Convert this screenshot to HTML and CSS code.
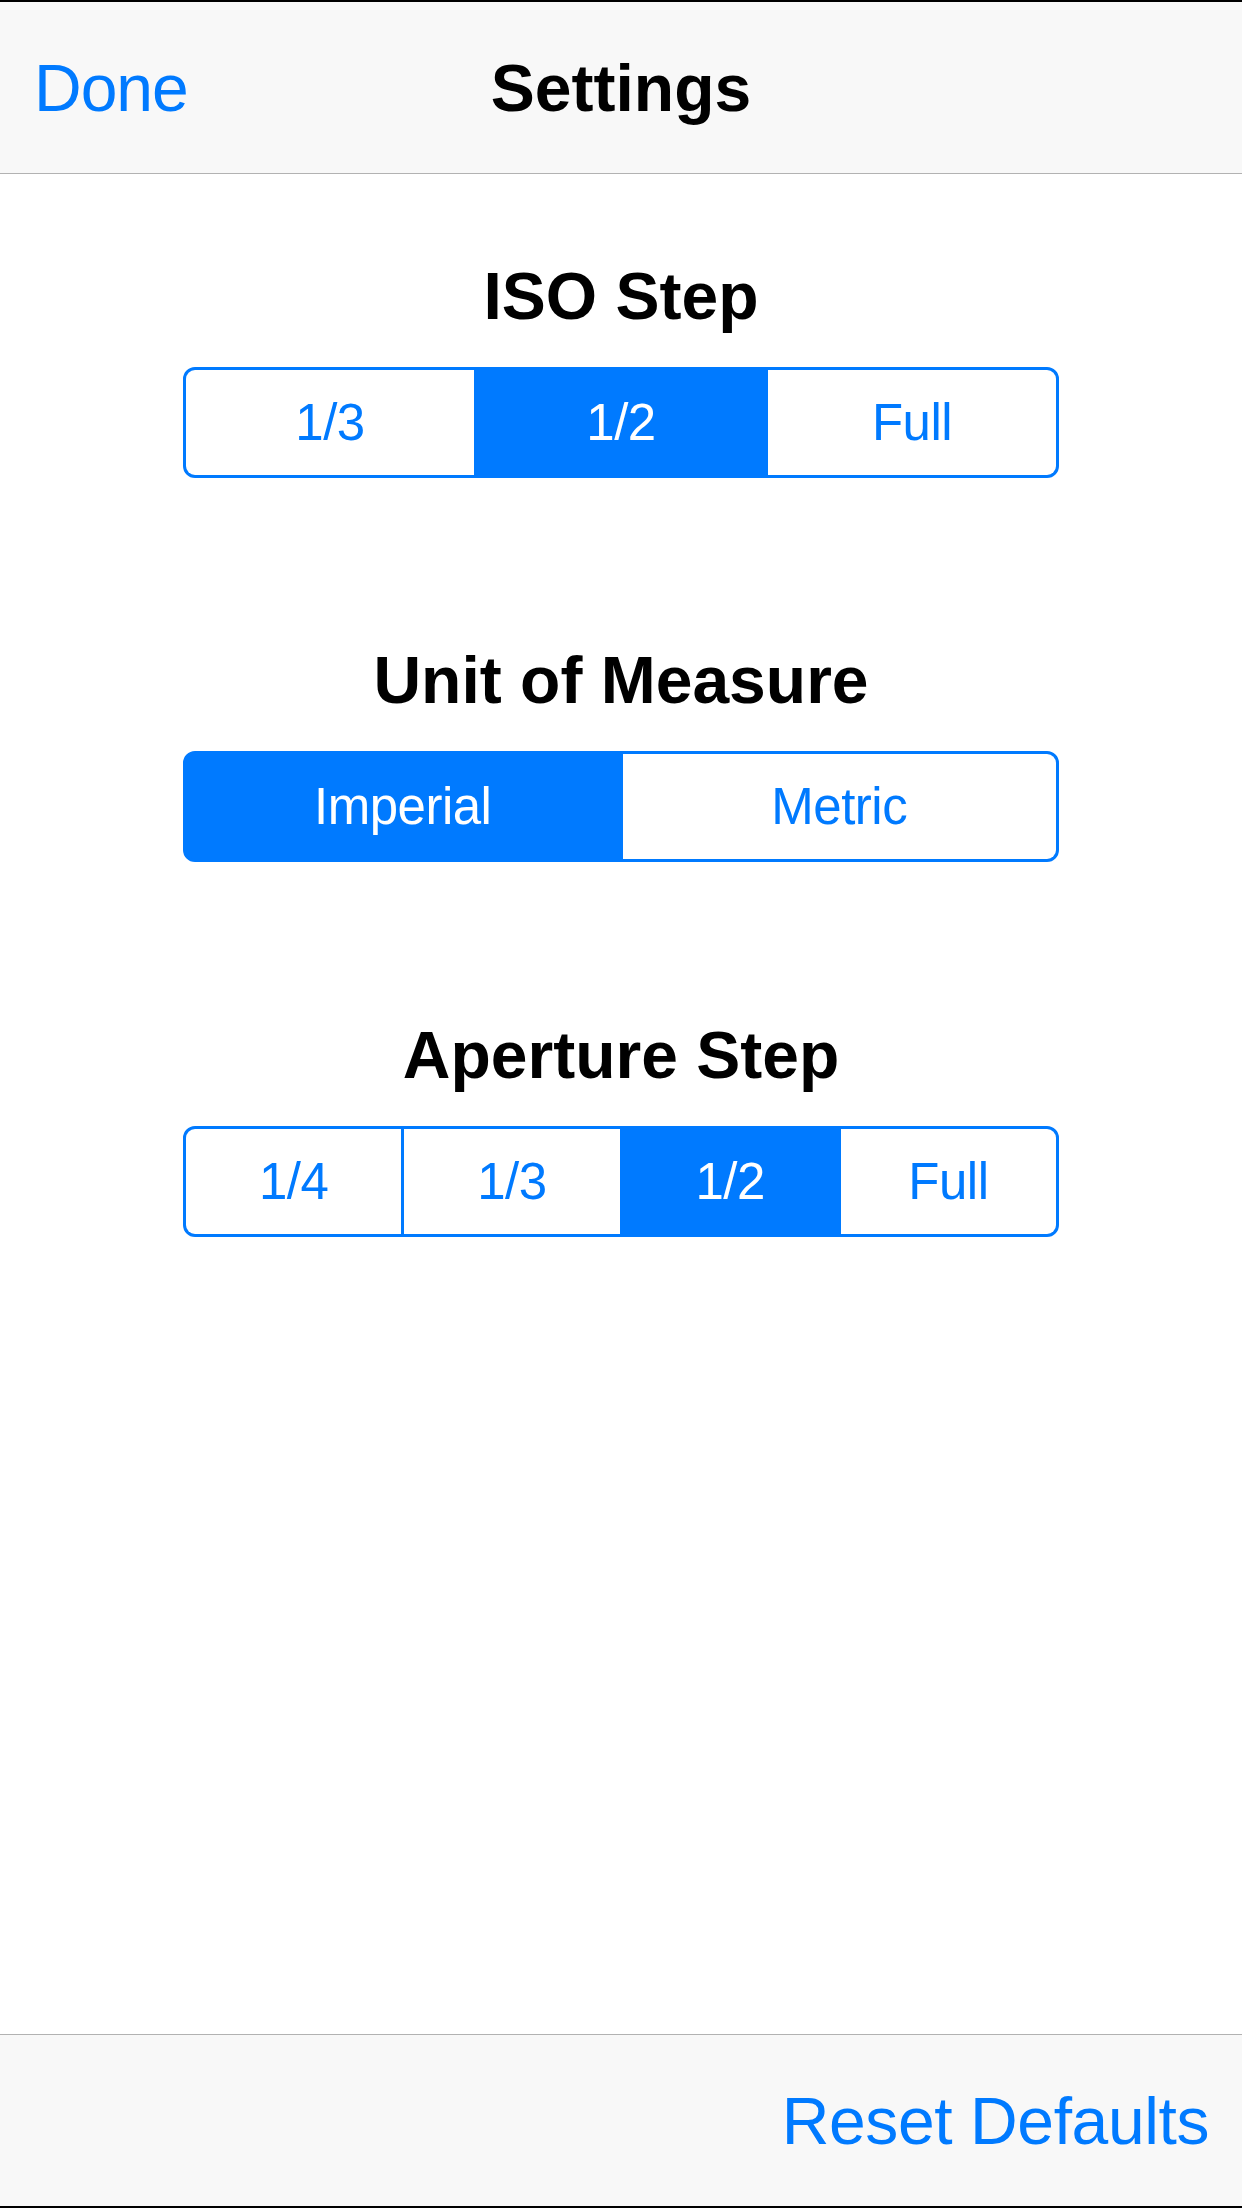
FILE: index.html
```html
<!DOCTYPE html>
<html lang="en">
<head>
<meta charset="utf-8">
<title>Settings</title>
<link rel="stylesheet" href="styles.css">
</head>
<body>
<div class="app">
  <header class="navbar">
    <span class="nav-button">Done</span>
    <h1 class="nav-title">Settings</h1>
    <span class="nav-spacer"></span>
  </header>

  <main class="content">
    <section class="section section-iso">
      <h2 class="section-title">ISO Step</h2>
      <div class="segmented cols-3">
        <div class="segment">1/3</div>
        <div class="segment selected">1/2</div>
        <div class="segment">Full</div>
      </div>
    </section>

    <section class="section section-unit">
      <h2 class="section-title">Unit of Measure</h2>
      <div class="segmented cols-2">
        <div class="segment selected">Imperial</div>
        <div class="segment">Metric</div>
      </div>
    </section>

    <section class="section section-aperture">
      <h2 class="section-title">Aperture Step</h2>
      <div class="segmented cols-4">
        <div class="segment">1/4</div>
        <div class="segment">1/3</div>
        <div class="segment selected">1/2</div>
        <div class="segment">Full</div>
      </div>
    </section>
  </main>

  <footer class="toolbar">
    <span class="toolbar-button">Reset Defaults</span>
  </footer>
</div>
</body>
</html>
```
FILE: styles.css
```css
html, body {
  margin: 0;
  padding: 0;
  background: #ffffff;
}

body {
  font-family: "Liberation Sans", Arial, sans-serif;
}

.app {
  width: 1242px;
  height: 2208px;
  box-sizing: border-box;
  border-top: 2px solid #000000;
  border-bottom: 2px solid #000000;
  display: flex;
  flex-direction: column;
  background: #ffffff;
}

/* Navigation bar */
.navbar {
  height: 172px;
  box-sizing: border-box;
  background: #f8f8f8;
  border-bottom: 1px solid #b2b2b2;
  display: grid;
  grid-template-columns: 1fr auto 1fr;
  align-items: center;
  padding: 0 34px;
  flex-shrink: 0;
}

.nav-button {
  justify-self: start;
  color: #007aff;
  font-size: 66px;
  line-height: 66px;
  letter-spacing: -1px;
}

.nav-title {
  margin: 0;
  color: #000000;
  font-size: 66px;
  line-height: 66px;
  font-weight: 700;
}

/* Content */
.content {
  flex: 1;
  padding-top: 89px;
}

.section {
  display: flex;
  flex-direction: column;
  align-items: center;
}

.section-unit {
  margin-top: 169px;
}

.section-aperture {
  margin-top: 160px;
}

.section-title {
  margin: 0;
  font-size: 66px;
  line-height: 66px;
  font-weight: 700;
  color: #000000;
  text-align: center;
}

/* Segmented control: blue frame, blue dividers via the gap */
.segmented {
  margin-top: 38px;
  width: 876px;
  height: 111px;
  box-sizing: border-box;
  border: 3px solid #007aff;
  border-radius: 12px;
  overflow: hidden;
  display: grid;
  column-gap: 3px;
  background: #007aff;
}

.cols-2 { grid-template-columns: repeat(2, 1fr); }
.cols-3 { grid-template-columns: repeat(3, 1fr); }
.cols-4 { grid-template-columns: repeat(4, 1fr); }

.segment {
  display: flex;
  align-items: center;
  justify-content: center;
  background: #ffffff;
  color: #007aff;
  font-size: 51px;
  line-height: 51px;
  letter-spacing: -0.5px;
}

.segment.selected {
  background: #007aff;
  color: #ffffff;
}

/* Bottom toolbar */
.toolbar {
  height: 172px;
  box-sizing: border-box;
  background: #f8f8f8;
  border-top: 1px solid #b2b2b2;
  display: flex;
  align-items: center;
  justify-content: flex-end;
  padding: 0 33px;
  flex-shrink: 0;
}

.toolbar-button {
  color: #007aff;
  font-size: 66px;
  line-height: 66px;
  letter-spacing: -0.4px;
}
```
